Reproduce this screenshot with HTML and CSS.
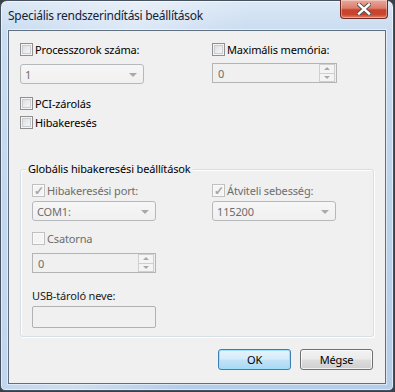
FILE: index.html
```html
<!DOCTYPE html>
<html lang="hu">
<head>
<meta charset="utf-8">
<title>Speciális rendszerindítási beállítások</title>
<link rel="stylesheet" href="styles.css">
</head>
<body>
<div class="window">
  <div class="titlebar">
    <span class="title">Speciális rendszerindítási beállítások</span>
    <div class="close" aria-label="Bezárás">
      <svg width="14" height="12" viewBox="0 0 14 12" aria-hidden="true">
        <path d="M2 1.5 L12 10.5 M12 1.5 L2 10.5" stroke="#4a4a4a" stroke-width="4.2" stroke-linecap="square" fill="none"/>
        <path d="M2 1.5 L12 10.5 M12 1.5 L2 10.5" stroke="#ffffff" stroke-width="2.4" stroke-linecap="square" fill="none"/>
      </svg>
    </div>
  </div>
  <div class="client">
    <div class="pair top">
      <div class="col">
        <div class="check"><span class="box"></span><span>Processzorok száma:</span></div>
        <div class="combo dis"><span>1</span><span class="arrow"></span></div>
      </div>
      <div class="col">
        <div class="check"><span class="box"></span><span>Maximális memória:</span></div>
        <div class="spin"><span>0</span><span class="spinbtns"><span class="sb up"></span><span class="sb down"></span></span></div>
      </div>
    </div>
    <div class="check pci"><span class="box"></span><span>PCI-zárolás</span></div>
    <div class="check dbg"><span class="box"></span><span>Hibakeresés</span></div>

    <div class="group">
      <span class="legend">Globális hibakeresési beállítások</span>
      <div class="pair inner">
        <div class="col">
          <div class="check dis"><span class="box checked">✓</span><span>Hibakeresési port:</span></div>
          <div class="combo dis"><span>COM1:</span><span class="arrow"></span></div>
        </div>
        <div class="col">
          <div class="check dis"><span class="box checked">✓</span><span>Átviteli sebesség:</span></div>
          <div class="combo dis"><span>115200</span><span class="arrow"></span></div>
        </div>
      </div>
      <div class="check dis csat"><span class="box disbox"></span><span>Csatorna</span></div>
      <div class="spin small"><span>0</span><span class="spinbtns"><span class="sb up"></span><span class="sb down"></span></span></div>
      <div class="label usb">USB-tároló neve:</div>
      <div class="textbox"></div>
    </div>

    <div class="buttons">
      <div class="btn default">OK</div>
      <div class="btn">Mégse</div>
    </div>
  </div>
</div>
</body>
</html>
```
FILE: styles.css
```css
* { box-sizing: border-box; }
html, body { margin: 0; padding: 0; }
body {
  width: 395px;
  height: 392px;
  background: #3b4046;
  font-family: "Noto Sans", "Open Sans", sans-serif;
  font-size: 11px;
  letter-spacing: -0.15px;
  color: #000;
  overflow: hidden;
}
.window {
  width: 394px;
  height: 391px;
  border: 1px solid #46525f;
  border-radius: 7px 7px 5px 5px;
  background:
    linear-gradient(100deg, rgba(255,255,255,0) 0%, rgba(255,255,255,0.35) 30%, rgba(255,255,255,0) 55%),
    linear-gradient(to bottom, #dce8f5 0px, #c9dcf1 30px, #bcd3ec 200px, #b4cde9 391px);
  box-shadow: inset 0 0 0 1px rgba(255,255,255,0.55);
  padding: 0 7px 6px 7px;
  display: flex;
  flex-direction: column;
}
.titlebar {
  height: 29px;
  display: flex;
  align-items: flex-start;
  justify-content: space-between;
  flex: none;
}
.title {
  font-size: 12px;
  letter-spacing: -0.28px;
  color: #13233a;
  margin-top: 6px;
  margin-left: 0px;
}
.close {
  width: 48px;
  height: 19px;
  margin-top: -1px;
  margin-right: -2px;
  border: 1px solid #6e2a20;
  border-top: none;
  border-radius: 0 0 4px 4px;
  background: linear-gradient(to bottom, #e9a99c 0%, #dc7e6b 45%, #c9432e 55%, #c8442f 80%, #e0836d 100%);
  box-shadow: inset 0 0 0 1px rgba(255,255,255,0.35);
  display: flex;
  align-items: center;
  justify-content: center;
}
.close svg { display: block; }
.client {
  flex: 1;
  background: #f0f0f0;
  border: 1px solid #5f6f80;
  box-shadow: 0 0 0 1px rgba(255,255,255,0.5);
  padding: 11px 11px 11px 11px;
  display: flex;
  flex-direction: column;
}
.pair {
  display: grid;
  grid-template-columns: 192px 1fr;
}
.pair.inner { grid-template-columns: 180px 1fr; }
.col { display: flex; flex-direction: column; }
.check {
  height: 15px;
  display: flex;
  align-items: center;
  gap: 2px;
  white-space: nowrap;
}
.check.dis { color: #6d6d6d; }
.box {
  width: 13px;
  height: 13px;
  flex: none;
  border: 1px solid #8f8f8f;
  background: linear-gradient(135deg, #d7d9dd 0%, #eeeeee 60%, #f7f7f7 100%);
  box-shadow: inset 0 0 0 1px #f4f4f4, inset 0 0 0 2px #c9ccd1;
  display: flex;
  align-items: center;
  justify-content: center;
  font-size: 12px;
  line-height: 1;
  color: #a6a6a6;
  font-weight: bold;
}
.box.checked, .box.disbox {
  border-color: #c0c0c0;
  background: #f4f4f4;
  box-shadow: inset 0 0 0 1px #fafafa;
}
.combo {
  margin-top: 7px;
  width: 124px;
  height: 20px;
  border: 1px solid #b6b9bc;
  border-radius: 3px;
  background: linear-gradient(to bottom, #f6f6f6 0%, #f0f0f0 100%);
  display: flex;
  align-items: center;
  justify-content: space-between;
  padding: 0 6px 0 4px;
  color: #6d6d6d;
}
.arrow {
  width: 0;
  height: 0;
  border-left: 4px solid transparent;
  border-right: 4px solid transparent;
  border-top: 4px solid #a9a9a9;
  margin-top: 1px;
}
.spin {
  margin-top: 6px;
  width: 125px;
  height: 20px;
  border: 1px solid #b4b4b4;
  background: #f0f0f0;
  display: flex;
  align-items: center;
  justify-content: space-between;
  padding: 0 1px 0 5px;
  color: #6d6d6d;
}
.spinbtns {
  display: flex;
  flex-direction: column;
  gap: 0;
  height: 18px;
  width: 16px;
}
.sb {
  flex: 1;
  border: 1px solid #cfcfcf;
  background: #f4f4f4;
  display: flex;
  align-items: center;
  justify-content: center;
}
.sb + .sb { margin-top: -1px; }
.sb::after {
  content: "";
  width: 0;
  height: 0;
  border-left: 3px solid transparent;
  border-right: 3px solid transparent;
}
.sb.up::after { border-bottom: 3px solid #a9a9a9; }
.sb.down::after { border-top: 3px solid #a9a9a9; }
.pci { margin-top: 12px; }
.dbg { margin-top: 4px; }
.group {
  position: relative;
  margin-top: 39px;
  border: 1px solid #d5dfe5;
  border-radius: 3px;
  box-shadow: inset 1px 1px 0 #ffffff, 1px 1px 0 #ffffff;
  padding: 13px 11px 8px 11px;
  display: flex;
  flex-direction: column;
}
.legend {
  position: absolute;
  top: -9px;
  left: 5px;
  padding: 0 2px;
  background: #f0f0f0;
  white-space: nowrap;
  line-height: 16px;
}
.group .combo { margin-top: 3px; }
.csat { margin-top: 10px; }
.spin.small { margin-top: 7px; width: 124px; }
.label { height: 15px; line-height: 15px; }
.usb { margin-top: 15px; color: #1b1b1b; }
.textbox {
  margin-top: 3px;
  width: 124px;
  height: 22px;
  border: 1px solid #b1b1b1;
  border-radius: 2px;
  background: #f0f0f0;
}
.buttons {
  margin-top: 12px;
  display: flex;
  justify-content: flex-end;
  gap: 9px;
  padding-right: 1px;
}
.btn {
  width: 73px;
  height: 21px;
  border: 1px solid #707070;
  border-radius: 3px;
  background: linear-gradient(to bottom, #f2f2f2 0%, #ebebeb 48%, #dddddd 52%, #cfcfcf 100%);
  box-shadow: inset 0 0 0 1px rgba(255,255,255,0.7);
  display: flex;
  align-items: center;
  justify-content: center;
  color: #000;
}
.btn.default {
  border-color: #3c7fb1;
  background: linear-gradient(to bottom, #e5f4fc 0%, #d5ecfa 48%, #c2e3f8 52%, #a9d8f5 100%);
  box-shadow: inset 0 0 0 1px #9ee0fb;
}
```
